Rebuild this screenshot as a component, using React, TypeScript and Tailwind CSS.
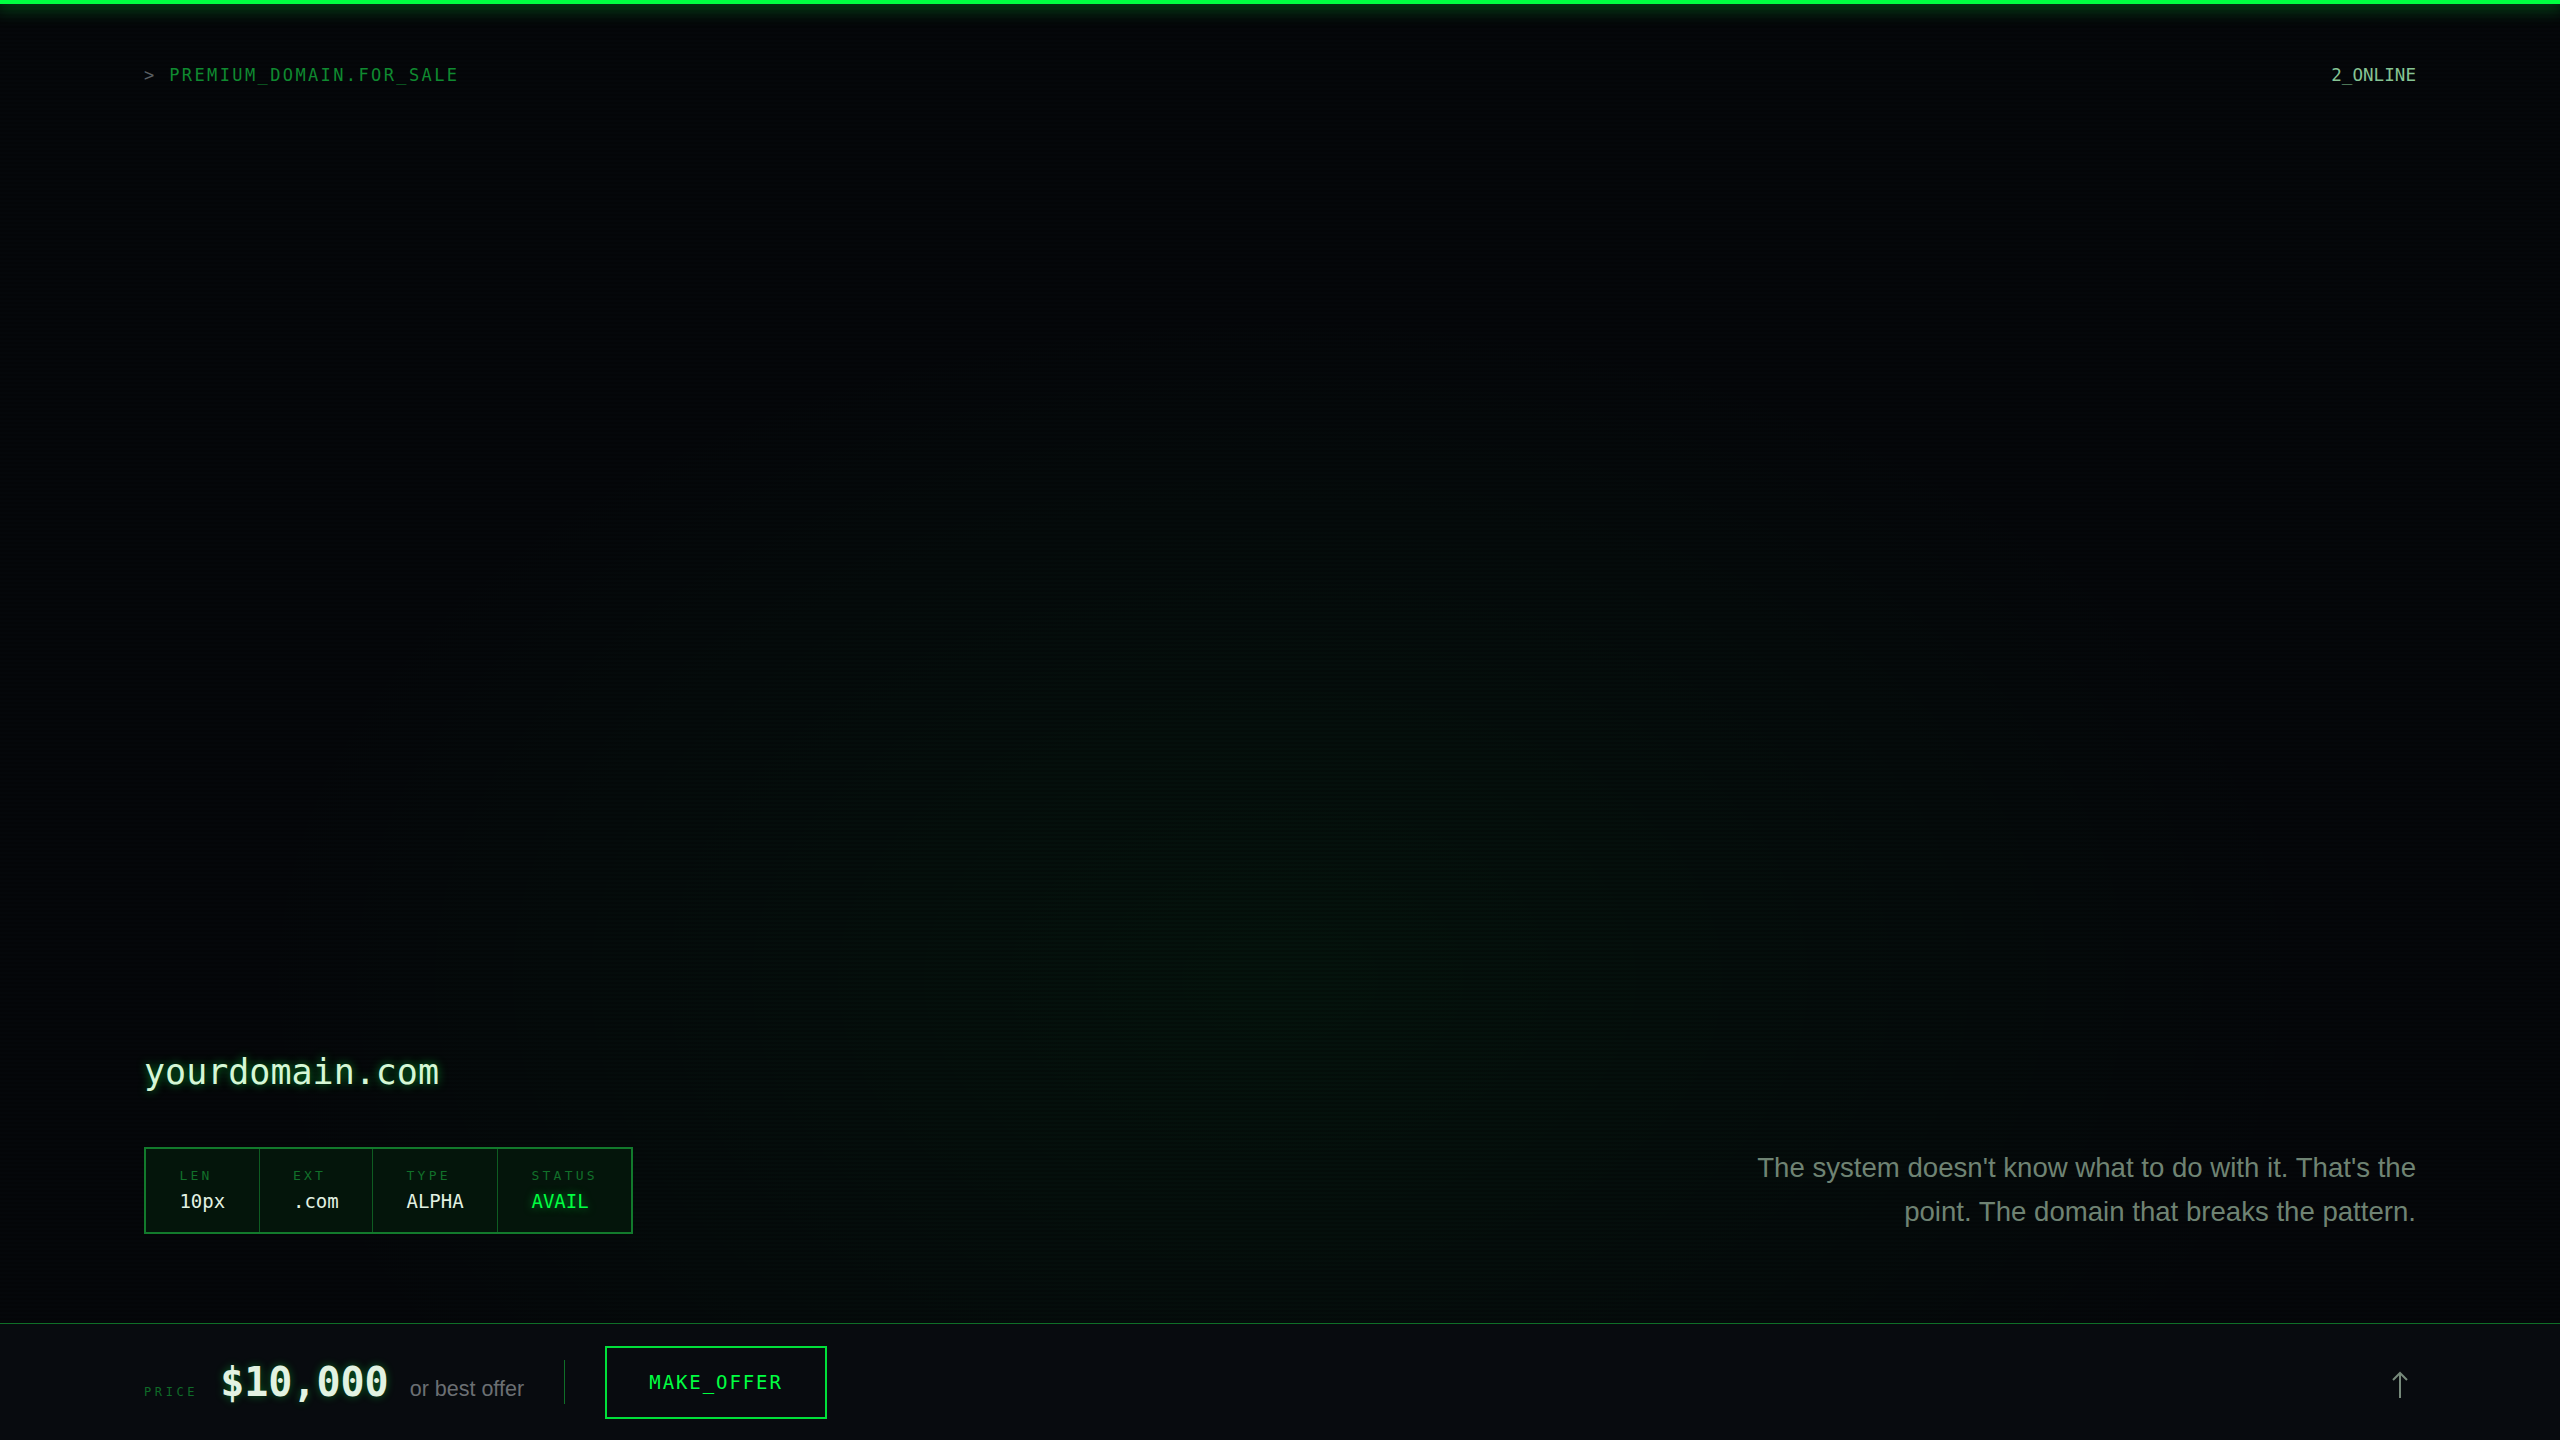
import React from "react";

const stats = [
  { label: "LEN", value: "10px", accent: false },
  { label: "EXT", value: ".com", accent: false },
  { label: "TYPE", value: "ALPHA", accent: false },
  { label: "STATUS", value: "AVAIL", accent: true },
];

export default function App() {
  return (
    <div className="relative flex h-screen w-full flex-col overflow-hidden bg-[#05070a] font-['DejaVu_Sans_Mono',monospace]">
      {/* glow + scanlines overlay */}
      <div className="pointer-events-none absolute inset-0 bg-[radial-gradient(ellipse_1300px_850px_at_50%_68%,rgba(0,255,65,0.05)_0%,rgba(0,255,65,0.025)_45%,transparent_80%)]" />
      <div className="pointer-events-none absolute inset-0 bg-[repeating-linear-gradient(0deg,rgba(0,0,0,0.22)_0px,rgba(0,0,0,0.22)_2px,transparent_2px,transparent_4px)]" />

      {/* top bar */}
      <div className="relative h-[4px] w-full shrink-0 bg-[#00ff41] shadow-[0_0_18px_4px_rgba(0,255,65,0.35)]" />

      {/* main */}
      <div className="relative flex flex-1 flex-col px-[144px] pt-[59px] pb-[89px]">
        <div className="flex items-center justify-between">
          <div className="text-[17px] leading-[24px] tracking-[0.14em] text-[#0f8a30]">
            <span className="text-[#5a5f63]">&gt;</span> PREMIUM_DOMAIN.FOR_SALE
          </div>
          <div className="text-[17.6px] leading-[24px] text-[#86c494]">2_ONLINE</div>
        </div>

        <div className="flex-1" />

        <div className="flex items-end justify-between">
          <div className="flex flex-col">
            <div className="mb-[53px] text-[35px] leading-[44px] text-[#d6f7d6] [text-shadow:0_0_10px_rgba(0,255,65,0.55)]">
              yourdomain.com
            </div>
            <div className="flex self-start border-2 border-[#127a2c] bg-[#04150b]">
              {stats.map((s, i) => (
                <div
                  key={s.label}
                  className={
                    "flex flex-col px-[33.4px] pt-[17px] pb-[18px] " +
                    (i > 0 ? "border-l border-[#0e5c22]" : "")
                  }
                >
                  <div className="text-[13px] leading-[20px] tracking-[0.25em] text-[#12702a]">
                    {s.label}
                  </div>
                  <div
                    className={
                      s.accent
                        ? "mt-[2px] text-[19px] leading-[26px] text-[#00ff41] [text-shadow:0_0_8px_rgba(0,255,65,0.5)]"
                        : "mt-[2px] text-[19px] leading-[26px] text-[#e2f2e2]"
                    }
                  >
                    {s.value}
                  </div>
                </div>
              ))}
            </div>
          </div>

          <p className="text-right font-['Liberation_Sans',Arial,sans-serif] text-[27.6px] leading-[44px] text-[#6f8373]">
            The system doesn't know what to do with it. That's the
            <br />
            point. The domain that breaks the pattern.
          </p>
        </div>
      </div>

      {/* footer */}
      <div className="relative flex h-[117px] shrink-0 items-center border-t border-[#0f6f28] bg-[#080b0f] px-[144px]">
        <div className="flex items-baseline">
          <span className="text-[12px] tracking-[0.3em] text-[#0f6b28]">PRICE</span>
          <span className="ml-[22px] text-[40px] font-bold leading-[48px] text-[#e2f2e2] [text-shadow:0_0_8px_rgba(0,255,65,0.35)]">
            $10,000
          </span>
          <span className="ml-[21px] font-['Liberation_Sans',Arial,sans-serif] text-[21.5px] text-[#6b6f73]">
            or best offer
          </span>
        </div>
        <div className="ml-[40px] h-[44px] w-px bg-[#0f6f28]" />
        <button className="ml-[40px] flex h-[73px] w-[222px] items-center justify-center border-2 border-[#00e03a] bg-transparent text-[19px] tracking-[0.1em] text-[#00ff41]">
          MAKE_OFFER
        </button>
        <div className="flex-1" />
        <svg width="20" height="30" viewBox="0 0 20 30" className="mt-[6px] mr-[6px] text-[#76897a]">
          <path d="M10 28 V3 M3 10 L10 3 L17 10" fill="none" stroke="currentColor" strokeWidth="2" />
        </svg>
      </div>
    </div>
  );
}
